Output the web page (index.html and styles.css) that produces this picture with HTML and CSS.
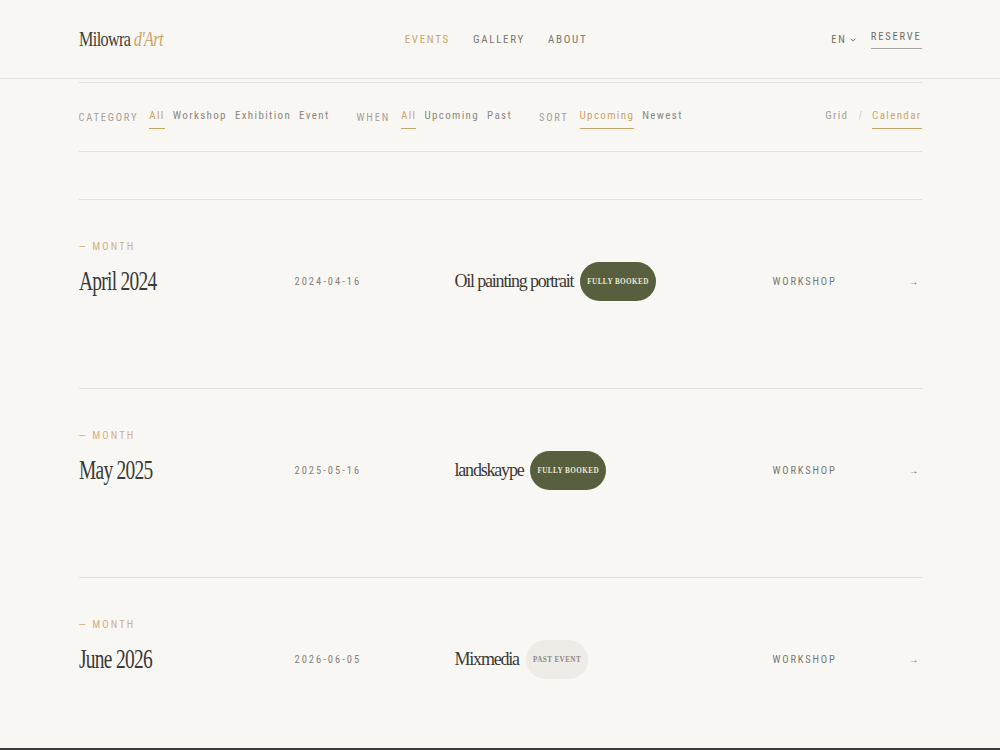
FILE: index.html
```html
<!DOCTYPE html>
<html lang="en">
<head>
<meta charset="utf-8">
<title>Milowra d'Art — Events</title>
<link rel="stylesheet" href="styles.css">
</head>
<body>
<header class="site-header">
  <div class="header-inner">
    <a class="logo" href="#">Milowra <em>d'Art</em></a>
    <nav class="main-nav">
      <a class="nav-link active" href="#">EVENTS</a>
      <a class="nav-link" href="#">GALLERY</a>
      <a class="nav-link" href="#">ABOUT</a>
    </nav>
    <div class="header-right">
      <span class="lang">EN <svg class="chev" width="6" height="4" viewBox="0 0 6 4"><path d="M0.6 0.6 L3 3.2 L5.4 0.6" fill="none" stroke="#6f6c67" stroke-width="0.9"/></svg></span>
      <a class="reserve" href="#">RESERVE</a>
    </div>
  </div>
</header>
<main class="page">
  <div class="filters">
    <div class="filter-groups">
      <div class="group">
        <span class="label">CATEGORY</span>
        <span class="opt active">All</span>
        <span class="opt">Workshop</span>
        <span class="opt">Exhibition</span>
        <span class="opt">Event</span>
      </div>
      <div class="group">
        <span class="label">WHEN</span>
        <span class="opt active">All</span>
        <span class="opt">Upcoming</span>
        <span class="opt">Past</span>
      </div>
      <div class="group">
        <span class="label">SORT</span>
        <span class="opt active">Upcoming</span>
        <span class="opt">Newest</span>
      </div>
    </div>
    <div class="view-toggle">
      <span class="opt">Grid</span>
      <span class="sep">/</span>
      <span class="opt active">Calendar</span>
    </div>
  </div>

  <section class="event-list">
    <article class="event">
      <div class="month-label">— MONTH</div>
      <h2 class="month">April 2024</h2>
      <div class="date">2024-04-16</div>
      <div class="title-wrap"><span class="title">Oil painting portrait</span><span class="badge booked">FULLY BOOKED</span></div>
      <div class="cat">WORKSHOP</div>
      <div class="arrow">&#8594;</div>
    </article>
    <article class="event">
      <div class="month-label">— MONTH</div>
      <h2 class="month">May 2025</h2>
      <div class="date">2025-05-16</div>
      <div class="title-wrap"><span class="title">landskaype</span><span class="badge booked">FULLY BOOKED</span></div>
      <div class="cat">WORKSHOP</div>
      <div class="arrow">&#8594;</div>
    </article>
    <article class="event">
      <div class="month-label">— MONTH</div>
      <h2 class="month">June 2026</h2>
      <div class="date">2026-06-05</div>
      <div class="title-wrap"><span class="title">Mixmedia</span><span class="badge past">PAST EVENT</span></div>
      <div class="cat">WORKSHOP</div>
      <div class="arrow">&#8594;</div>
    </article>
  </section>
</main>
<div class="bottom-edge"></div>
</body>
</html>
```
FILE: styles.css
```css
* { box-sizing: border-box; }
html, body { margin: 0; padding: 0; }
body {
  background: #f9f7f3;
  color: #3b3a37;
  font-family: "Liberation Sans Narrow", "Roboto Condensed", Roboto, "Liberation Sans", sans-serif;
}
a { color: inherit; text-decoration: none; }

.site-header {
  height: 79px;
  border-bottom: 1px solid #e6e3dd;
}
.header-inner {
  width: 843px;
  margin: 0 auto;
  height: 78px;
  display: grid;
  grid-template-columns: 1fr auto 1fr;
  align-items: center;
}
.logo {
  justify-self: start;
  display: inline-block;
  font-family: "Liberation Serif", serif;
  font-size: 21px;
  letter-spacing: -0.8px;
  color: #3d3c39;
  transform: scaleX(0.77);
  transform-origin: left center;
  white-space: nowrap;
}
.logo em { color: #c9a46b; font-style: italic; }
.main-nav {
  display: flex;
  gap: 23px;
  margin-right: 8px;
}
.nav-link {
  font-size: 11px;
  letter-spacing: 1.7px;
  color: #7a7772;
}
.nav-link.active { color: #c9a46b; }
.header-right {
  justify-self: end;
  display: flex;
  align-items: center;
  gap: 15px;
}
.lang {
  font-size: 10.5px;
  letter-spacing: 2px;
  color: #6f6c67;
  padding-top: 1px;
  display: inline-flex;
  align-items: center;
  gap: 3px;
}
.chev { display: block; margin-top: 1px; }
.reserve {
  font-size: 10.5px;
  letter-spacing: 1.8px;
  color: #6f6c67;
  padding: 0 0 5px;
  border-bottom: 1px solid #a9a69f;
}

.page {
  width: 843px;
  margin: 3px auto 0;
}
.filters {
  height: 70px;
  border-top: 1px solid #e3e0da;
  border-bottom: 1px solid #e3e0da;
  display: flex;
  justify-content: space-between;
  align-items: center;
  padding-top: 4px;
}
.filter-groups {
  display: flex;
  gap: 27px;
}
.group {
  display: flex;
  align-items: baseline;
  gap: 8px;
}
.label {
  font-size: 10.5px;
  letter-spacing: 1.8px;
  color: #a3a09a;
  margin-right: 3px;
  position: relative;
  top: 2px;
}
.opt {
  font-size: 11px;
  letter-spacing: 1.35px;
  color: #8a8781;
  padding-bottom: 6px;
  border-bottom: 1px solid transparent;
}
.opt.active {
  color: #c9a46b;
  border-bottom-color: #c9a46b;
}
.view-toggle {
  display: flex;
  align-items: baseline;
  gap: 10px;
}
.view-toggle .opt { color: #a3a09a; }
.view-toggle .opt.active { color: #c9a46b; }
.sep { color: #c9c6c0; font-size: 10px; }

.event-list {
  margin-top: 47px;
}
.event {
  height: 189px;
  border-top: 1px solid #e3e0da;
  padding-top: 40px;
  display: grid;
  grid-template-columns: 216px 160px 318px 1fr auto;
  grid-template-rows: 12px 39px;
  row-gap: 10px;
  align-items: center;
}
.month-label {
  grid-column: 1 / -1;
  font-size: 10.5px;
  letter-spacing: 2.1px;
  color: #d1b184;
}
.month {
  margin: 0;
  justify-self: start;
  font-family: "Liberation Serif", serif;
  font-weight: normal;
  font-size: 27px;
  letter-spacing: -1px;
  color: #3b3a37;
  transform: scaleX(0.72);
  transform-origin: left center;
  white-space: nowrap;
}
.date {
  font-size: 10.5px;
  letter-spacing: 2px;
  color: #85827c;
}
.title-wrap {
  display: flex;
  align-items: center;
  gap: 7px;
}
.title {
  font-family: "Liberation Serif", serif;
  font-size: 18px;
  letter-spacing: -1.2px;
  color: #3b3a37;
}
.badge {
  height: 39px;
  border-radius: 20px;
  display: inline-flex;
  align-items: center;
  padding: 0 7px;
  font-family: "Liberation Serif", serif;
  font-size: 7.2px;
  font-weight: bold;
  letter-spacing: 0.4px;
}
.badge.booked { background: #575f3e; color: #ece7d9; }
.badge.past { background: #efebe6; color: #8d8983; }
.cat {
  font-size: 10.5px;
  letter-spacing: 1.8px;
  color: #7a7772;
}
.arrow {
  font-size: 10px;
  color: #6a6762;
  padding-right: 3px;
}
.bottom-edge {
  position: fixed;
  left: 0;
  right: 0;
  bottom: 0;
  height: 2px;
  background: #3c3c3c;
}
```
